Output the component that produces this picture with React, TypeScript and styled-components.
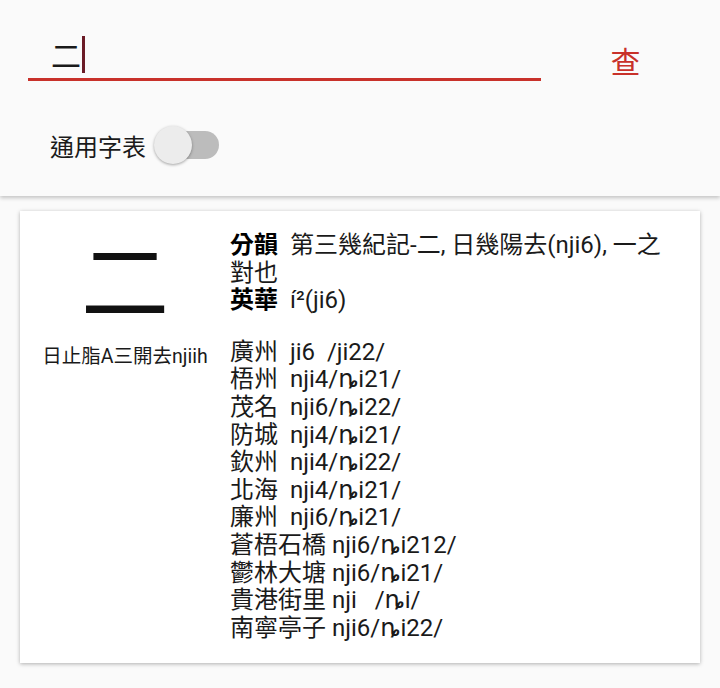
import React from 'react';
import styled, { createGlobalStyle } from 'styled-components';

const RED = '#c8312a';

const GlobalStyle = createGlobalStyle`
  html, body {
    margin: 0;
    padding: 0;
    background: #fafafa;
    font-family: Roboto, "DejaVu Sans", "Noto Sans CJK TC", sans-serif;
    color: #1a1a1a;
  }
`;

const Header = styled.header`
  background: #fafafa;
  box-shadow: 0 2px 4px rgba(0, 0, 0, 0.22);
  padding: 30px 0 31px;
  position: relative;
`;

const SearchRow = styled.div`
  display: flex;
  align-items: stretch;
  padding-left: 28px;
`;

const Field = styled.div`
  width: 513px;
  height: 51px;
  box-sizing: border-box;
  display: flex;
  align-items: center;
  padding-left: 23px;
  border-bottom: 3px solid ${RED};
  font-size: 30px;
`;

const Caret = styled.span`
  display: inline-block;
  width: 3px;
  height: 37px;
  margin-left: 1px;
  background: #6b1b26;
`;

const SearchButton = styled.button`
  flex: 1;
  border: none;
  background: transparent;
  color: ${RED};
  font-family: inherit;
  font-size: 30px;
  padding: 8px 10px 0 0;
`;

const ToggleRow = styled.div`
  display: flex;
  align-items: center;
  height: 40px;
  margin-top: 43px;
  padding-left: 50px;
  font-size: 24px;
`;

const Switch = styled.div`
  position: relative;
  width: 56px;
  height: 28px;
  margin-left: 17px;
  border-radius: 14px;
  background: #bcbcbc;
`;

const Thumb = styled.span`
  position: absolute;
  left: -9px;
  top: -5px;
  width: 38px;
  height: 38px;
  border-radius: 50%;
  background: #ececec;
  box-shadow: 0 1px 3px rgba(0, 0, 0, 0.35);
`;

const Main = styled.main`
  padding: 15px 20px 25px;
`;

const Card = styled.section`
  display: flex;
  background: #ffffff;
  box-shadow: 0 1px 4px rgba(0, 0, 0, 0.3);
`;

const Glyph = styled.div`
  width: 210px;
  flex-shrink: 0;
  display: flex;
  flex-direction: column;
  align-items: center;
`;

const BigChar = styled.div`
  font-size: 88px;
  line-height: 1;
  margin-top: 29px;
  color: #111;
`;

const Caption = styled.div`
  font-size: 19.5px;
  line-height: 22px;
  margin-top: 18px;
`;

const Info = styled.div`
  flex: 1;
  padding: 21px 20px 21px 0;
  font-size: 24px;
  line-height: 27.6px;
`;

const Block = styled.div`
  & + & {
    margin-top: 24px;
  }
`;

const Line = styled.div`
  white-space: pre-wrap;
`;

const Label = styled.b`
  font-weight: 700;
  margin-right: 12px;
  color: #000;
`;

const readings: [string, string][] = [
  ['廣州', '  ji6  /ji22/'],
  ['梧州', '  nji4/ȵi21/'],
  ['茂名', '  nji6/ȵi22/'],
  ['防城', '  nji4/ȵi21/'],
  ['欽州', '  nji4/ȵi22/'],
  ['北海', '  nji4/ȵi21/'],
  ['廉州', '  nji6/ȵi21/'],
  ['蒼梧石橋', ' nji6/ȵi212/'],
  ['鬱林大塘', ' nji6/ȵi21/'],
  ['貴港街里', ' nji   /ȵi/'],
  ['南寧亭子', ' nji6/ȵi22/'],
];

export default function App() {
  return (
    <>
      <GlobalStyle />
      <Header>
        <SearchRow>
          <Field>
            二<Caret />
          </Field>
          <SearchButton>查</SearchButton>
        </SearchRow>
        <ToggleRow>
          通用字表
          <Switch>
            <Thumb />
          </Switch>
        </ToggleRow>
      </Header>
      <Main>
        <Card>
          <Glyph>
            <BigChar>二</BigChar>
            <Caption>日止脂A三開去njiih</Caption>
          </Glyph>
          <Info>
            <Block>
              <Line>
                <Label>分韻</Label>第三幾紀記-二, 日幾陽去(nji6), 一之對也
              </Line>
              <Line>
                <Label>英華</Label>í²(ji6)
              </Line>
            </Block>
            <Block>
              {readings.map(([place, value]) => (
                <Line key={place}>
                  {place}
                  {value}
                </Line>
              ))}
            </Block>
          </Info>
        </Card>
      </Main>
    </>
  );
}
